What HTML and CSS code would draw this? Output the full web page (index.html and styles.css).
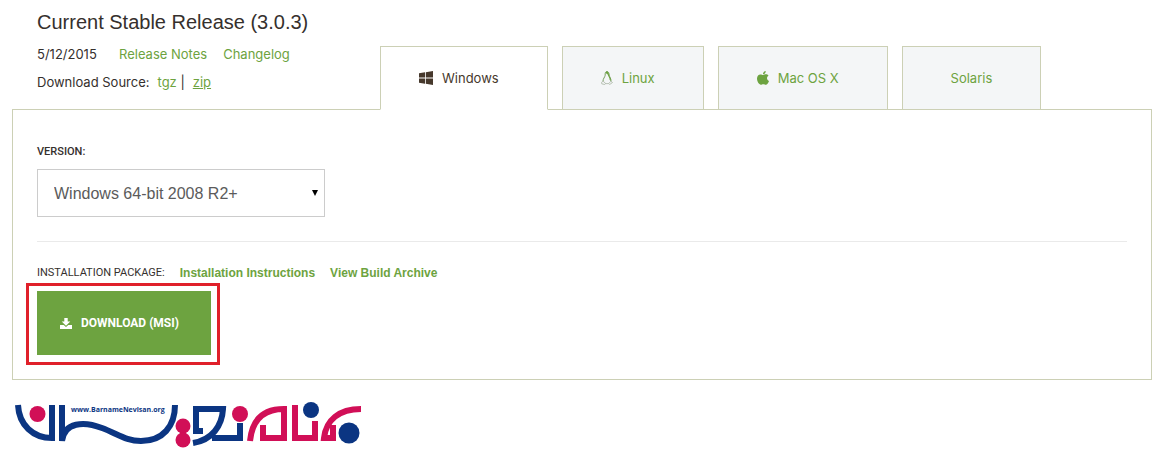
FILE: index.html
```
<!DOCTYPE html>
<html lang="en">
<head>
  <meta charset="utf-8">
  <title>Current Stable Release</title>
  <link rel="stylesheet" href="styles.css">
</head>
<body>

<div class="header">
  <div class="release">
    <h1>Current Stable Release (3.0.3)</h1>
    <p class="release-row"><span class="date">5/12/2015</span> <a href="#notes">Release Notes</a> <a href="#changelog">Changelog</a></p>
    <p class="source-row"><span>Download Source:</span> <span><a href="#tgz">tgz</a> |</span> <a href="#zip" class="underlined">zip</a></p>
  </div>

  <div class="tabs" role="tablist">
    <button type="button" class="tab active" role="tab" aria-selected="true">
      <svg class="icon" viewBox="0 0 14 14" fill="currentColor" aria-hidden="true">
        <path d="M0 2.2 6 1.3V6.6H0zM6.8 1.2 14 0V6.6H6.8zM0 7.4H6V12.7L0 11.8zM6.8 7.4H14V14L6.8 12.8z"/>
      </svg>
      Windows
    </button>
    <button type="button" class="tab" role="tab">
      <svg class="icon linux" viewBox="0 0 12 14" aria-hidden="true">
        <path d="M4.2 4.2C4 2.2 4.3.6 6 .6S8 2.2 8.2 4.2C8.5 6 10.2 7.4 10 10.4M4.2 4.2C3.8 6.4 2 7.6 2 10.2" fill="none" stroke="#779e61"/>
        <path d="M4.6 2C4.8.8 5.3.4 6 .4c1.2 0 1.7 1 1.8 2.7C8 5.4 10 6.5 10 9.8L8.7 9C8.6 6.5 7 5.4 6.7 3.6z" fill="#6da340"/>
        <path d="M2 10.2.6 11.3.8 12.9 3.8 13.5 4.6 12.3zM9.9 10.2 11.5 11.5 8.7 13.5 7.7 12.6zM4.6 12.6H7.7" fill="#f4f6f7" stroke="#a9b5a5" stroke-width=".8"/>
      </svg>
      Linux
    </button>
    <button type="button" class="tab" role="tab">
      <svg class="icon apple" viewBox="0 0 12 14" fill="currentColor" aria-hidden="true">
        <path d="M8.7 0C8.8 1.8 7.5 3.2 6 3.2 5.9 1.6 7.2.2 8.7 0zM6.2 4C6.9 4 7.7 3.3 8.9 3.3c1 0 2 .5 2.6 1.4C9.3 6 9.6 9 12 9.9 11.5 11.5 10.2 13.8 8.8 13.8c-.9 0-1.3-.5-2.5-.5s-1.6.5-2.4.5C2 13.8 0 10.4 0 7.6 0 4.9 1.6 3.4 3.4 3.4 4.6 3.4 5.5 4 6.2 4z"/>
      </svg>
      Mac OS X
    </button>
    <button type="button" class="tab wide" role="tab">Solaris</button>
  </div>
</div>

<div class="panel">
  <label for="version" class="caption">VERSION:</label>
  <div class="select-wrap">
    <select id="version" name="version">
      <option>Windows 64-bit 2008 R2+</option>
    </select>
  </div>

  <div class="package">
    <span class="caption light">INSTALLATION PACKAGE:</span>
    <a href="#instructions">Installation Instructions</a>
    <a href="#archive">View Build Archive</a>
  </div>

  <div class="highlight">
    <button type="button" class="download">
      <svg viewBox="0 0 12 11" fill="currentColor" aria-hidden="true">
        <path d="M4.3 0H7.7V3.5H10.3L6 7.7 1.7 3.5H4.3zM0 7H3.7L6 9 8.3 7H12V11H0z"/>
      </svg>
      DOWNLOAD (MSI)
    </button>
  </div>
</div>

<svg class="logo" viewBox="14 400 350 49" role="img" aria-label="Barname Nevisan">
  <g fill="none" stroke="#0b3582" stroke-width="6">
    <path d="M18 405C19 425 33 438 52 438V405"/>
    <path d="M62 405V441C64 422 84 421 102 428C118 434 126 441 141 441C163 441 175 426 175 405"/>
    <path d="M203 431H196V409H223C222 426 212 440 193 443"/>
    <path d="M212 438H240V423"/>
  </g>
  <g fill="none" stroke="#d10f57" stroke-width="6">
    <path d="M250 441C252 420 263 409 284 409V438H263V425"/>
    <path d="M295 405V438H315V421"/>
    <path d="M361 409C339 409 326 420 324 438H333V425"/>
  </g>
  <g fill="#d10f57">
    <circle cx="37.5" cy="414" r="8"/>
    <circle cx="183" cy="426" r="7.5"/>
    <circle cx="183" cy="440" r="7.5"/>
    <circle cx="240" cy="414" r="8"/>
  </g>
  <g fill="#0b3582">
    <circle cx="311" cy="410" r="8"/>
    <circle cx="349" cy="433" r="10.5"/>
    <text x="71" y="412" class="logo-text">www.BarnameNevisan.org</text>
  </g>
</svg>

</body>
</html>
```
FILE: styles.css
```
body {
  margin: 0;
  padding: 10px 11px 0 12px;
  background: #fff;
  color: #35302d;
  font-family: "Liberation Sans", Arial, sans-serif;
  font-size: 12px;
}

a {
  color: #6da340;
  text-decoration: none;
}

a.underlined {
  text-decoration: underline;
}

/* Release info and tabs */
.header {
  display: grid;
  grid-template-columns: 368px 1fr;
  align-items: end;
}

.release {
  padding: 0 0 13px 25px;
}

.release h1 {
  margin: 0 0 6px;
  font-size: 20px;
  font-weight: normal;
  line-height: 24px;
}

.release p {
  display: flex;
  margin: 0;
  font-family: Inter, sans-serif;
  font-size: 13px;
  line-height: 28px;
}

.release-row {
  gap: 16px;
}

.date {
  min-width: 66px;
}

.release .source-row {
  gap: 8px;
}

.tabs {
  display: flex;
  gap: 14px;
  margin-bottom: -1px;
}

.tab {
  display: flex;
  align-items: center;
  gap: 9px;
  height: 64px;
  padding: 0 48px 0 38px;
  border: 1px solid #ccd0b5;
  background: #f4f6f7;
  color: #6da340;
  font-family: Inter, sans-serif;
  font-size: 13px;
  white-space: nowrap;
  cursor: pointer;
}

.tab.wide {
  padding: 0 48px;
}

.tab.active {
  border-bottom-color: #fff;
  background: #fff;
  color: #46382c;
  z-index: 1;
}

.icon {
  width: 14px;
  height: 14px;
}

.icon.linux,
.icon.apple {
  width: 12px;
}

/* Download panel */
.panel {
  padding: 34px 24px 24px;
  border: 1px solid #ccd0b5;
}

.caption {
  display: block;
  font-family: Roboto, sans-serif;
  font-size: 11px;
  font-weight: 500;
  line-height: 16px;
}

.caption.light {
  font-weight: 400;
}

.select-wrap {
  position: relative;
  width: 288px;
  margin-top: 9px;
}

.select-wrap::after {
  content: "";
  position: absolute;
  top: 21px;
  right: 7px;
  border: 3px solid transparent;
  border-top: 6px solid #000;
  border-bottom: 0;
  pointer-events: none;
}

select {
  display: block;
  width: 100%;
  height: 48px;
  padding: 0 16px;
  border: 1px solid #ccc;
  border-radius: 0;
  background: #fff;
  color: #5b5b5b;
  appearance: none;
  font-family: inherit;
  font-size: 16px;
}

.package {
  display: flex;
  align-items: center;
  gap: 15px;
  margin-top: 24px;
  padding-top: 23px;
  border-top: 1px solid #eaeaea;
}

.package a {
  font-weight: bold;
  line-height: 16px;
}

.highlight {
  position: relative;
  width: fit-content;
  margin-top: 10px;
}

/* Red frame around the button */
.highlight::before {
  content: "";
  position: absolute;
  inset: -8px -9px -10px -11px;
  border: 3px solid #e0202a;
  pointer-events: none;
}

.download {
  display: flex;
  align-items: center;
  gap: 9px;
  width: 174px;
  height: 64px;
  padding: 0 23px;
  border: 0;
  background: #6da340;
  color: #fff;
  font-family: Roboto, sans-serif;
  font-size: 12px;
  font-weight: bold;
  white-space: nowrap;
  cursor: pointer;
}

.download svg {
  width: 12px;
  height: 11px;
  flex: none;
}

.logo {
  display: block;
  width: 350px;
  height: 49px;
  margin: 20px 0 0 2px;
}

.logo-text {
  font-family: "Open Sans", sans-serif;
  font-size: 7px;
  font-weight: bold;
}
```
